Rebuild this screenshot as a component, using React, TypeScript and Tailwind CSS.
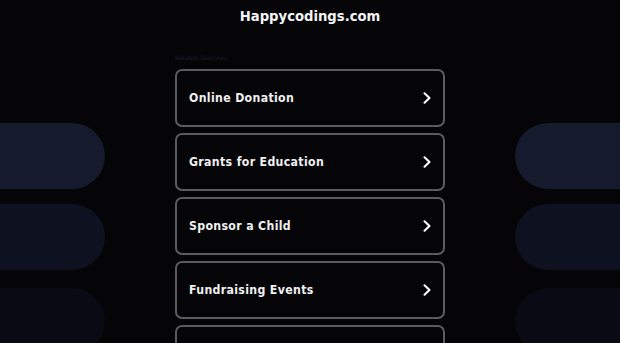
const links = ["Online Donation", "Grants for Education", "Sponsor a Child", "Fundraising Events", "Community Volunteering"];

const pills = [
  { bg: "bg-[#161a2d]", mt: "mt-0" },
  { bg: "bg-[#0e1120]", mt: "mt-[15px]" },
  { bg: "bg-[#090a14]", mt: "mt-[18px]" },
];

function Chevron() {
  return (
    <svg width="8" height="12" viewBox="0 0 8 12" fill="none" className="shrink-0">
      <path d="M1.5 1.2l5 4.8-5 4.8" stroke="#ffffff" strokeWidth="2" strokeLinecap="round" strokeLinejoin="round" />
    </svg>
  );
}

function SidePills({ side }: { side: "left" | "right" }) {
  return (
    <div className="flex w-[105px] shrink-0 flex-col pt-[123px]">
      {pills.map((p) => (
        <div
          key={p.bg}
          className={`h-[66px] w-full shrink-0 ${p.bg} ${p.mt} ${side === "left" ? "rounded-r-[33px]" : "rounded-l-[33px]"}`}
        />
      ))}
    </div>
  );
}

export default function App() {
  return (
    <div
      className="flex h-[343px] w-[620px] justify-between overflow-hidden bg-[#050508]"
      style={{ fontFamily: '"DejaVu Sans", Verdana, sans-serif' }}
    >
      <SidePills side="left" />
      <div className="flex w-[270px] shrink-0 flex-col">
        <h1 className="mt-[7px] text-center text-[13.2px] font-bold leading-[20px] text-[#f4f4f4]">
          Happycodings.com
        </h1>
        <div className="mt-[26px] text-[6px] leading-[10px] text-[#1b1d2e]">Related Searches</div>
        <div className="mt-[6px] flex flex-col gap-[6px]">
          {links.map((t) => (
            <a
              key={t}
              href="#"
              className="flex h-[58px] shrink-0 items-center justify-between rounded-[7px] border-2 border-[#5c5c60] pl-[12px] pr-[12px]"
            >
              <span className="font-['DejaVu_Sans_Condensed','DejaVu_Sans',sans-serif] text-[12.2px] font-bold tracking-[0.35px] text-[#f0f0f0]">
                {t}
              </span>
              <Chevron />
            </a>
          ))}
        </div>
      </div>
      <SidePills side="right" />
    </div>
  );
}
